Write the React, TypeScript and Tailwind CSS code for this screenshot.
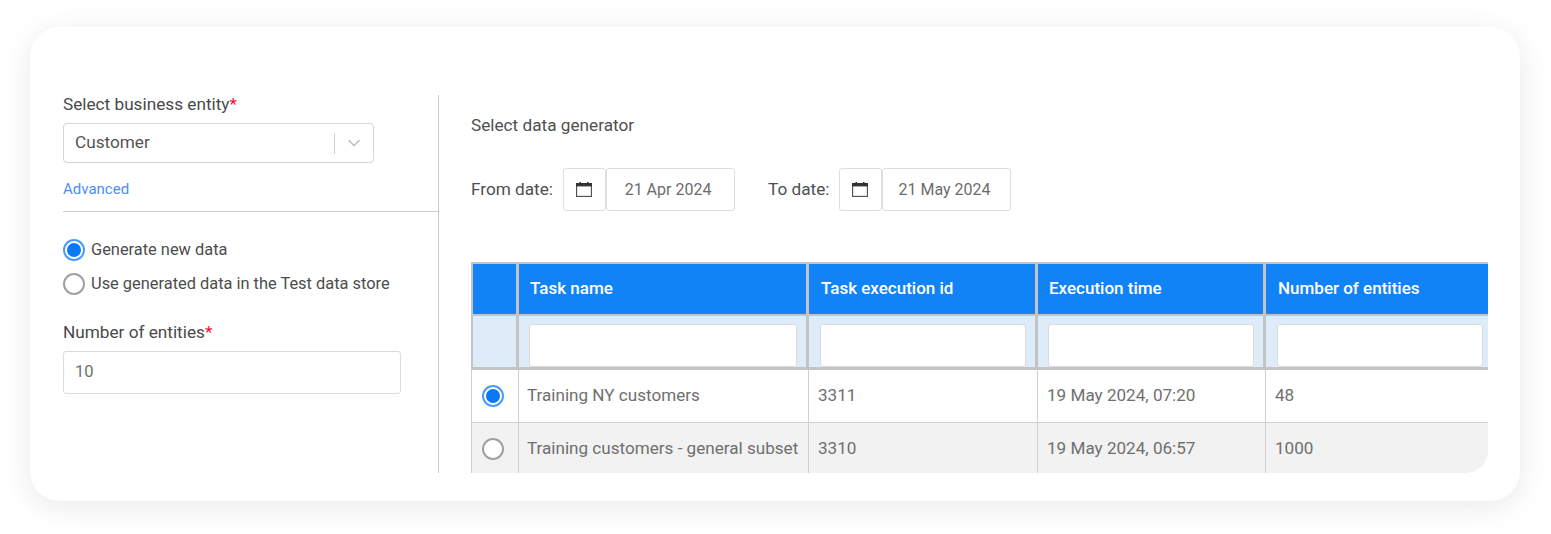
const font = { fontFamily: "Roboto, sans-serif" };

function Radio({ checked }: { checked?: boolean }) {
  return checked ? (
    <span className="flex h-[22px] w-[22px] shrink-0 items-center justify-center rounded-full border-2 border-[#4a9bfb] bg-white">
      <span className="h-[14px] w-[14px] rounded-full bg-[#0a79f6]" />
    </span>
  ) : (
    <span className="h-[22px] w-[22px] shrink-0 rounded-full border-2 border-[#a0a0a0] bg-white" />
  );
}

function DateField({ value, width }: { value: string; width: string }) {
  return (
    <div className="flex">
      <div className="flex h-[43px] w-[43px] items-center justify-center rounded-[3px] border-[1.5px] border-[#dedede]">
        <svg className="mr-[1px]" width="16" height="15" viewBox="0 0 16 15" fill="none">
          <rect x="0.6" y="1.6" width="14.8" height="12.8" fill="#fff" stroke="#4a4a4a" strokeWidth="1.1" />
          <rect x="0" y="1" width="16" height="3.4" fill="#333" />
          <rect x="3.5" y="0" width="1.5" height="1.5" fill="#333" />
          <rect x="11" y="0" width="1.5" height="1.5" fill="#333" />
        </svg>
      </div>
      <div className={`flex h-[43px] items-center justify-center rounded-[3px] border-[1.5px] border-[#dedede] pr-[5px] text-[16px] text-[#6d6d6d] ${width}`}>
        {value}
      </div>
    </div>
  );
}

const headers = ["Task name", "Task execution id", "Execution time", "Number of entities"];
const headPad = ["pl-[11px]", "pl-[12px]", "pl-[11px]", "pl-[12px]"];
const filterPad = [
  "pl-[10px] pr-[9px] border-r-[3px]",
  "pl-[11px] pr-[9px] border-r-[3px]",
  "pl-[10px] pr-[9px] border-r-[3px]",
  "pl-[11px] pr-[5px]",
];
const rows = [
  ["Training NY customers", "3311", "19 May 2024, 07:20", "48"],
  ["Training customers - general subset", "3310", "19 May 2024, 06:57", "1000"],
];

export default function App() {
  return (
    <div className="h-[534px] w-[1551px] overflow-hidden bg-white pl-[30px] pt-[27px]" style={font}>
      <div className="flex h-[474px] w-[1490px] rounded-[30px] bg-white pl-[33px] pt-[68px] shadow-[0_6px_30px_rgba(0,0,0,0.09)]">
        <div className="h-[378px] w-[376px] shrink-0 border-r border-r-[#c8c8c8]">
          <div className="text-[17.2px] leading-[19px] text-[#4a4a4a]">
            Select business entity<span className="text-[#f0142f]">*</span>
          </div>
          <div className="mt-[9px] flex h-[40px] w-[311px] items-center rounded-[4px] border-[1.5px] border-[#d6d6d6] pl-[11px] text-[17.2px] text-[#555]">
            <span className="flex-1">Customer</span>
            <span className="h-[21px] w-[1px] bg-[#cfcfcf]" />
            <svg className="mx-[12px]" width="14" height="8" viewBox="0 0 14 8" fill="none">
              <path d="M1.5 1.2 7 6.5l5.5-5.3" stroke="#c4c4c4" strokeWidth="1.7" />
            </svg>
          </div>
          <div className="mt-[18px] text-[15px] leading-[17px] text-[#4c8dfb]">Advanced</div>
          <div className="mt-[13px] h-[1px] w-full bg-[#cdcdcd]" />
          <div className="mt-[27px] flex flex-col gap-[12px] text-[16.4px] leading-[22px] text-[#4d4d4d]">
            <label className="flex items-center gap-[6px]">
              <Radio checked />
              Generate new data
            </label>
            <label className="flex items-center gap-[6px]">
              <Radio />
              Use generated data in the Test data store
            </label>
          </div>
          <div className="mt-[28px] text-[17.2px] leading-[19px] text-[#4a4a4a]">
            Number of entities<span className="text-[#f0142f]">*</span>
          </div>
          <div className="mt-[9px] flex h-[43px] w-[338px] items-center rounded-[3px] border-[1.5px] border-[#dcdcdc] pl-[11px] text-[16.5px] text-[#707070]">
            10
          </div>
        </div>

        <div className="ml-[32px] w-[1017px] shrink-0">
          <div className="mt-[21px] text-[17.2px] leading-[19px] text-[#4f4f4f]">Select data generator</div>
          <div className="mt-[33px] flex h-[43px] items-center text-[17.2px] text-[#4f4f4f]">
            <span className="mr-[10px]">From date:</span>
            <DateField value="21 Apr 2024" width="w-[129px]" />
            <span className="ml-[33px] mr-[10px]">To date:</span>
            <DateField value="21 May 2024" width="w-[129px]" />
          </div>

          <div className="mt-[51px] h-[211px] w-[1017px] overflow-hidden rounded-br-[22px]">
            <table className="w-[1017px] table-fixed border-separate border-spacing-0 text-[17.1px]">
              <colgroup>
                <col className="w-[48px]" />
                <col className="w-[290px]" />
                <col className="w-[229px]" />
                <col className="w-[228px]" />
                <col className="w-[222px]" />
              </colgroup>
              <thead>
                <tr className="h-[54px] bg-[#1283f6] text-left font-medium text-white">
                  <th className="border-x-2 border-y-2 border-[#c4c4c4] border-r-[3px]" />
                  {headers.map((h, i) => (
                    <th
                      key={h}
                      className={`border-y-2 border-[#c4c4c4] text-[17px] font-medium ${headPad[i]} ${i < 3 ? "border-r-[3px]" : ""}`}
                    >
                      {h}
                    </th>
                  ))}
                </tr>
                <tr className="h-[54px] bg-[#deebf9]">
                  <th className="border-b-[3px] border-l-2 border-r-[3px] border-[#c4c4c4]" />
                  {headers.map((h, i) => (
                    <th key={h} className={`border-b-[3px] border-[#c4c4c4] pt-[8px] ${filterPad[i]}`}>
                      <div className="h-[43px] rounded-[3px] border-[1.5px] border-[#dbdbdb] bg-white" />
                    </th>
                  ))}
                </tr>
              </thead>
              <tbody className="text-[#6f6f6f]">
                {rows.map((r, ri) => (
                  <tr key={r[0]} className={ri === 0 ? "h-[53px] bg-white" : "h-[53px] bg-[#f2f2f2]"}>
                    <td className="border-b border-l border-r border-[#d0d0d0]">
                      <div className="flex justify-center pr-[5px]">
                        <Radio checked={ri === 0} />
                      </div>
                    </td>
                    {r.map((c, i) => (
                      <td
                        key={c}
                        className={`overflow-hidden whitespace-nowrap border-b border-[#d0d0d0] ${i === 0 ? "pl-[8px]" : "pl-[9px]"} ${i < 3 ? "border-r" : ""}`}
                      >
                        {c}
                      </td>
                    ))}
                  </tr>
                ))}
              </tbody>
            </table>
          </div>
        </div>
      </div>
    </div>
  );
}
